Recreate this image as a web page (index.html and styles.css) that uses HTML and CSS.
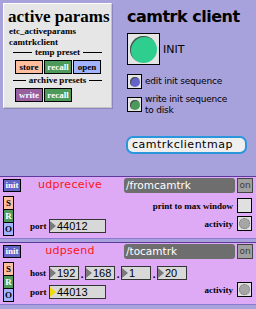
FILE: index.html
```html
<!DOCTYPE html>
<html lang="en">
  <head>
    <title>camtrk client</title>
    <link rel="stylesheet" href="styles.css">
  </head>
  <body>
    <div class="top">
      <div class="presets">
        <h1>active params</h1>
        <p class="small">etc_activeparams</p>
        <p class="small">camtrkclient</p>
        <p class="rule">temp preset</p>
        <div class="buttons">
          <span class="btn peach">store</span>
          <span class="btn green">recall</span>
          <span class="btn blue">open</span>
        </div>
        <p class="rule">archive presets</p>
        <div class="buttons">
          <span class="btn purple">write</span>
          <span class="btn green">recall</span>
        </div>
      </div>

      <div class="client">
        <h2>camtrk client</h2>
        <div class="init-row">
          <span class="bang big"><span class="dot mint"></span></span>
          <span class="init-label">INIT</span>
        </div>
        <div class="seq-row">
          <span class="bang"><span class="dot violet"></span></span>
          <span class="seq-label">edit init sequence</span>
        </div>
        <div class="seq-row write-row">
          <span class="bang"><span class="dot forest"></span></span>
          <span class="seq-label">write init sequence<br>to disk</span>
        </div>
        <div class="mapname">camtrkclientmap</div>
      </div>
    </div>

    <!-- receive from camtrk -->
    <div class="module">
      <div class="head">
        <span class="init">init</span>
        <span class="objname">udpreceive</span>
        <span class="address">/fromcamtrk</span>
        <span class="toggle">on</span>
      </div>
      <div class="body">
        <div class="sro">
          <span class="peach">S</span>
          <span class="green">R</span>
          <span class="blue">O</span>
        </div>
        <div class="fields">
          <div class="field">
            <span class="label">port</span>
            <span class="num"><span class="arrow"></span>44012</span>
          </div>
        </div>
        <div class="flags">
          <div class="flag">print to max window <span class="check"></span></div>
          <div class="flag">activity <span class="check"><span class="led"></span></span></div>
        </div>
      </div>
    </div>

    <!-- send to camtrk -->
    <div class="module">
      <div class="head">
        <span class="init">init</span>
        <span class="objname">udpsend</span>
        <span class="address">/tocamtrk</span>
        <span class="toggle">on</span>
      </div>
      <div class="body">
        <div class="sro">
          <span class="peach">S</span>
          <span class="green">R</span>
          <span class="blue">O</span>
        </div>
        <div class="fields">
          <div class="field">
            <span class="label">host</span>
            <span class="num short"><span class="arrow"></span>192</span>
            <span class="sep">.</span>
            <span class="num short"><span class="arrow"></span>168</span>
            <span class="sep">.</span>
            <span class="num short"><span class="arrow"></span>1</span>
            <span class="sep">.</span>
            <span class="num short"><span class="arrow"></span>20</span>
          </div>
          <div class="field">
            <span class="label">port</span>
            <span class="num"><span class="arrow active"></span>44013</span>
          </div>
        </div>
        <div class="flags">
          <div class="flag">activity <span class="check"><span class="led"></span></span></div>
        </div>
      </div>
    </div>
  </body>
</html>
```

FILE: styles.css
```css
body {
  margin: 0;
  width: 256px;
  height: 309px;
  overflow: hidden;
  background-color: #a8a2dc;
  font-family: "DejaVu Sans", sans-serif;
}

p {
  margin: 0;
}

.top {
  display: flex;
  height: 176px;
  padding: 3px 0 0 3px;
  box-sizing: border-box;
}

/* preset panel */
.presets {
  width: 109px;
  height: 105px;
  flex-shrink: 0;
  box-sizing: border-box;
  padding: 4px 3px 0 3px;
  background-color: #e6e6e6;
  border: 1px solid #c4c4c4;
  border-top-color: #ffffff;
  border-left-color: #ffffff;
  box-shadow: 1px 1px 0 #8c86bc;
}

h1 {
  margin: 0 0 0 1px;
  font: bold 17px/18px "Liberation Serif", serif;
  white-space: nowrap;
}

.small {
  margin-left: 2px;
  font: bold 9px/11px "Liberation Serif", serif;
}

.rule {
  display: flex;
  align-items: center;
  gap: 3px;
  margin: -1px 6px 0 6px;
  font: bold 9px/10px "Liberation Serif", serif;
}

.rule::before,
.rule::after {
  content: "";
  flex: 1;
  border-top: 1px solid #000;
}

.buttons {
  display: flex;
  gap: 1px;
  padding-left: 8px;
  margin: 3px 0 2px 0;
}

.btn {
  width: 28px;
  height: 14px;
  box-sizing: border-box;
  border: 1px solid #000;
  font: bold 9px/12px "Liberation Serif", serif;
  text-align: center;
}

.peach {
  background-color: #ffbe9e;
}

.green {
  background-color: #4e9a5c;
  color: white;
}

.blue {
  background-color: #a2b4ff;
}

.purple {
  background-color: #98609e;
  color: white;
}

/* client column */
.client {
  margin-left: 15px;
  padding-top: 5px;
}

h2 {
  margin: 0;
  font: bold 16px/18px "DejaVu Sans", sans-serif;
  letter-spacing: -0.5px;
}

.bang {
  display: flex;
  align-items: center;
  justify-content: center;
  width: 15px;
  height: 15px;
  box-sizing: border-box;
  border: 1px solid #000;
  background-color: #e4e4e4;
  flex-shrink: 0;
}

.bang.big {
  width: 33px;
  height: 32px;
}

.dot {
  width: 10px;
  height: 10px;
  border-radius: 50%;
  box-shadow: inset 1px 1px 0 #505050;
}

.big .dot {
  width: 27px;
  height: 27px;
}

.mint {
  background-color: #2ecf8e;
}

.violet {
  background-color: #6464c8;
}

.forest {
  background-color: #4a9a5a;
}

.init-row {
  display: flex;
  align-items: center;
  margin-top: 7px;
}

.init-label {
  margin-left: 3px;
  font-size: 11px;
}

.seq-row {
  display: flex;
  align-items: center;
  margin-top: 9px;
}

.seq-label {
  margin-left: 3px;
  font-size: 9px;
  line-height: 11px;
  letter-spacing: -0.2px;
}

.write-row {
  align-items: flex-start;
  margin-top: 5px;
}

.write-row .bang {
  margin-top: 3px;
}

.mapname {
  width: 121px;
  height: 18px;
  box-sizing: border-box;
  margin: 20px 0 0 -1px;
  padding-left: 4px;
  border: 2px solid #2a96dc;
  border-radius: 7px;
  background-color: #efefef;
  font-size: 11px;
  line-height: 14px;
  letter-spacing: 0.5px;
}

/* udp modules */
.module {
  height: 63px;
  box-sizing: border-box;
  margin-bottom: 3px;
  border-top: 1px solid #5b3c9c;
  border-bottom: 1px solid #8a7ad0;
  background-color: #deaaf6;
}

.head {
  display: flex;
  align-items: flex-start;
  height: 16px;
}

.init {
  width: 18px;
  height: 13px;
  box-sizing: border-box;
  margin: 2px 0 0 3px;
  border: 1px solid #000;
  background-color: #6464c8;
  color: white;
  font: bold 9px/11px "Liberation Serif", serif;
  text-align: center;
}

.objname {
  flex: 1;
  margin-right: 5px;
  color: #ff1414;
  font-size: 11px;
  line-height: 16px;
  letter-spacing: 0.3px;
  text-align: center;
}

.address {
  width: 111px;
  height: 15px;
  box-sizing: border-box;
  margin-top: 1px;
  padding-left: 2px;
  border-radius: 3px;
  background-color: #6e6e6e;
  color: white;
  font-size: 10.5px;
  line-height: 15px;
}

.toggle {
  width: 16px;
  height: 15px;
  box-sizing: border-box;
  margin: 1px 3px 0 2px;
  border: 1px solid #444;
  background-color: #a0a0a0;
  color: #3c3c3c;
  font-size: 9px;
  line-height: 13px;
  text-align: center;
}

.body {
  display: flex;
  height: 45px;
}

.sro {
  display: flex;
  flex-direction: column;
  width: 11px;
  margin: 3px 0 0 3px;
}

.sro span {
  height: 14px;
  box-sizing: border-box;
  border: 1px solid #000;
  font: bold 9px/12px "Liberation Serif", serif;
  text-align: center;
}

.sro span + span {
  margin-top: -1px;
}

.fields {
  display: flex;
  flex-direction: column;
  justify-content: flex-end;
  gap: 5px;
  margin-left: 16px;
  padding-bottom: 5px;
}

.field {
  display: flex;
  align-items: center;
  height: 14px;
}

.label {
  width: 19px;
  font: bold 9px "Liberation Serif", serif;
}

.num {
  display: flex;
  align-items: center;
  width: 57px;
  height: 14px;
  box-sizing: border-box;
  border: 1px solid #333;
  background-color: #d8d8d8;
  font: 11px "Liberation Sans", sans-serif;
}

.num.short {
  width: 30px;
}

.arrow {
  width: 0;
  height: 0;
  margin-right: 1px;
  border-left: 6px solid #7a7a7a;
  border-top: 5px solid transparent;
  border-bottom: 5px solid transparent;
}

.arrow.active {
  border-left-color: #f0dc00;
}

.sep {
  width: 6px;
  align-self: flex-end;
  font: bold 11px/12px "Liberation Serif", serif;
  text-align: center;
}

.flags {
  display: flex;
  flex-direction: column;
  justify-content: flex-end;
  align-items: flex-end;
  gap: 3px;
  margin: 0 4px 0 auto;
  padding-bottom: 7px;
}

.flag {
  display: flex;
  align-items: center;
  gap: 4px;
  font: bold 9px "Liberation Serif", serif;
}

.check {
  display: flex;
  align-items: center;
  justify-content: center;
  width: 15px;
  height: 15px;
  box-sizing: border-box;
  border: 1px solid #000;
  background-color: #e0e0e0;
}

.led {
  width: 11px;
  height: 11px;
  box-sizing: border-box;
  border-radius: 50%;
  border: 1px dotted #707070;
  background-color: #a6a6a6;
}
```
